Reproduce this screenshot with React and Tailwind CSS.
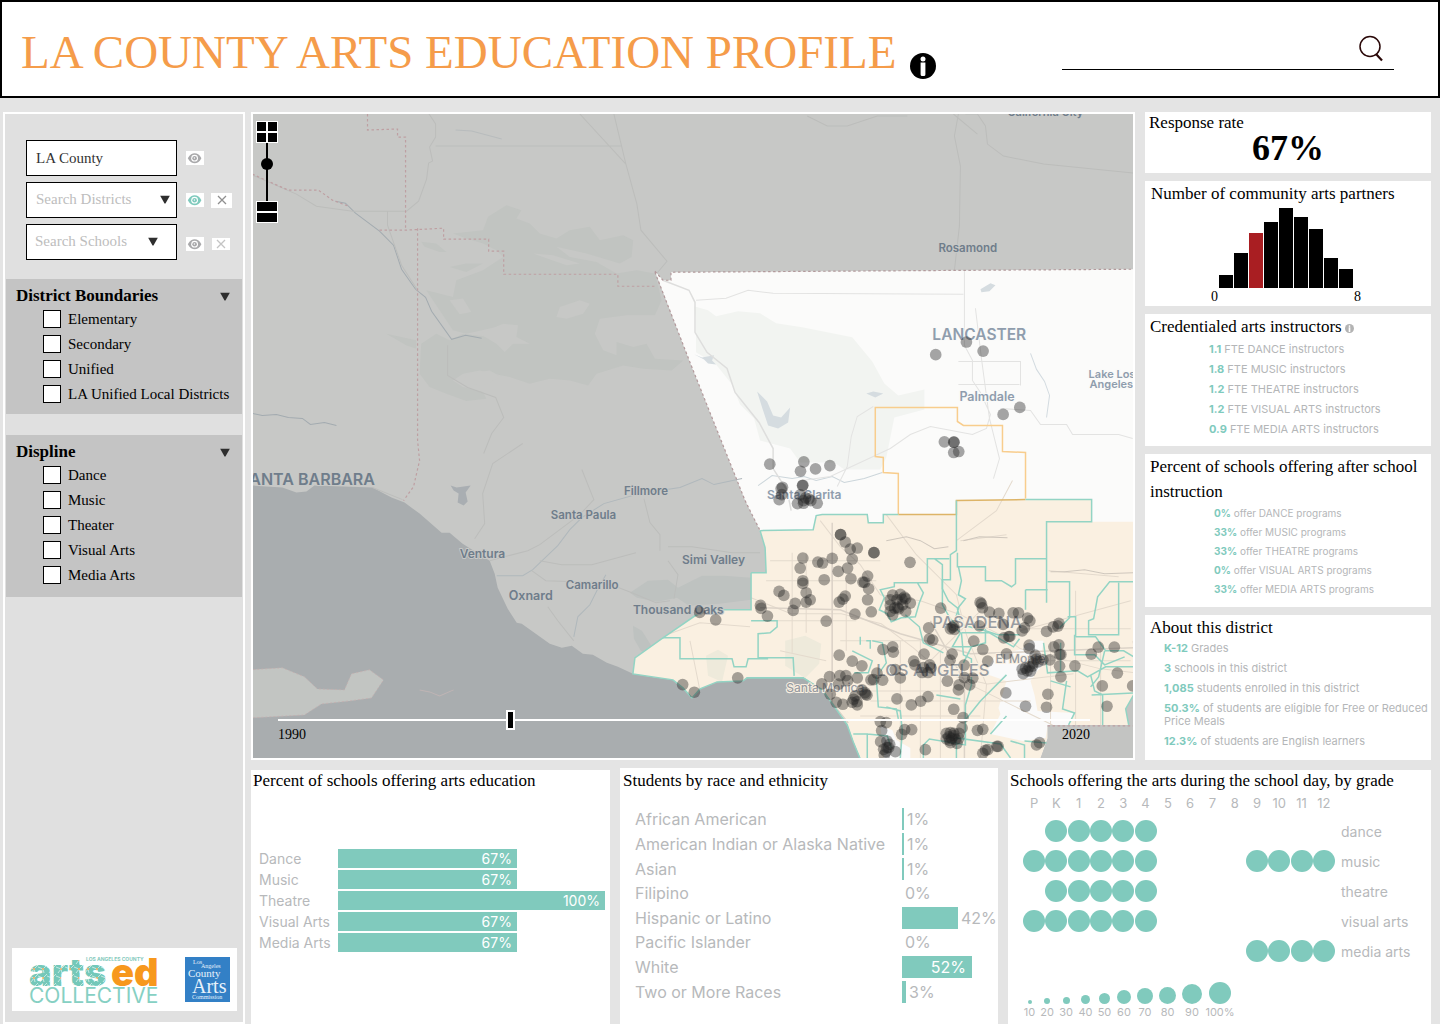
import { useState } from "react";

const SERIF = "font-['Liberation_Serif',serif]";
const SANS = "font-['Inter',sans-serif]";

/* ---------- icons ---------- */

function Eye({ className }) {
  return (
    <svg viewBox="0 0 18 14" className={"h-[14px] w-[18px] " + className} aria-hidden="true">
      <path d="M1.800 7.200C4 3.400 6.300 2.200 8.700 2.200s4.700 1.200 6.700 5c-2 3.800-4.300 5-6.700 5S4 11 1.800 7.200Z" fill="currentColor" />
      <circle cx="8.600" cy="7.200" r="3.400" fill="#fff" />
      <circle cx="8.600" cy="7.200" r="2.300" fill="currentColor" />
      <circle cx="8.400" cy="7" r="0.700" fill="#fff" />
    </svg>
  );
}

function Cross({ className }) {
  return (
    <svg viewBox="0 0 12 12" className={"h-3 w-3 " + className} aria-hidden="true">
      <path d="M2 2l8 8M10 2l-8 8" stroke="currentColor" strokeWidth="1.300" fill="none" />
    </svg>
  );
}

function Caret({ className = "" }) {
  return (
    <svg viewBox="0 0 10 9" className={"h-[9px] w-[10px] " + className} aria-hidden="true">
      <path d="M0.200 0.800h9.600L5.500 8.500h-1Z" fill="#2e2e2e" />
    </svg>
  );
}

function InfoIcon({ className }) {
  return (
    <svg viewBox="0 0 26 26" className={className} aria-hidden="true">
      <circle cx="13" cy="13" r="13" fill="currentColor" />
      <circle cx="13" cy="6" r="2.500" fill="#fff" />
      <path d="M10.600 9.500h4.800v12a1.500 1.500 0 0 1-1.500 1.500h-1.800a1.500 1.500 0 0 1-1.500-1.500Z" fill="#fff" />
    </svg>
  );
}

/* ---------- header ---------- */

function Header() {
  return (
    <header className="flex h-[98px] items-center justify-between border-2 border-black bg-white pt-[2px] pr-11 pl-[19px]">
      <div className="flex items-end gap-[14px] pt-1">
        <h1 className="text-[47px] leading-[56px] whitespace-nowrap text-[#f59c4a]">LA COUNTY ARTS EDUCATION PROFILE</h1>
        <button type="button" aria-label="About this profile" className="mb-px text-black">
          <InfoIcon className="h-[26px] w-[26px]" />
        </button>
      </div>
      <div className="flex h-10 w-[332px] items-end border-b border-black pr-2 pb-1.5">
        <input type="search" aria-label="Search" className="min-w-0 flex-1 bg-transparent text-lg outline-none" />
        <button type="button" aria-label="Run search">
          <svg viewBox="0 0 28 28" className="h-7 w-7" fill="none" stroke="#2a0808" aria-hidden="true">
            <circle cx="12" cy="11.500" r="10" strokeWidth="1.500" />
            <path d="M18 19l6 6.500" strokeWidth="2.200" />
          </svg>
        </button>
      </div>
    </header>
  );
}

/* ---------- sidebar ---------- */

const FIELD = "h-9 w-[151px] border border-black bg-white text-[15px]";

function CheckGroup({ title, items, className }) {
  return (
    <section className={"mx-px bg-[#c4c4c4] pt-[6px] " + className}>
      <button type="button" className="flex w-full items-center justify-between pr-3 pl-[10px] leading-[22px]">
        <span className="text-[17px] font-bold">{title}</span>
        <Caret />
      </button>
      <div className="mt-[3px] flex flex-col gap-[7px] pl-[37px]">
        {items.map((t) => (
          <label key={t} className="flex items-center gap-[7px] text-[15px] leading-[18px] whitespace-nowrap">
            <input type="checkbox" className="h-[18px] w-[18px] shrink-0 appearance-none border border-black bg-white checked:bg-black" />
            {t}
          </label>
        ))}
      </div>
    </section>
  );
}

function Logos() {
  return (
    <div className="mx-[7px] mr-[6px] mb-[11px] flex h-[63px] items-center justify-between bg-white pr-[7px] pl-[17px]">
      <svg viewBox="0 0 134 50" className="h-[50px] w-[134px]" role="img" aria-label="Los Angeles County Arts Ed Collective">
        <defs>
          <pattern id="mosaic" width="9" height="9" patternUnits="userSpaceOnUse">
            <rect width="9" height="9" fill="#74c8b9" />
            <path d="M0 3l5 2 4-4M5 5l1 4M5 5L2 9" fill="none" stroke="#e6f6f3" strokeWidth="0.700" />
            <circle cx="5" cy="5" r="0.900" fill="#f6a34a" />
          </pattern>
        </defs>
        <g fontFamily="Inter, sans-serif">
          <text x="0" y="31" fontSize="38" fontWeight="900" fill="url(#mosaic)">arts</text>
          <text x="82" y="31" fontSize="38" fontWeight="900" fill="#f7981d">ed</text>
          <text x="57" y="6" fontSize="5" fontWeight="700" fill="#86cabd">LOS ANGELES COUNTY</text>
          <text x="0" y="48" fontSize="21" fontWeight="400" fill="#86d0c3">COLLECTIVE</text>
        </g>
      </svg>
      <svg viewBox="0 0 45 45" className="h-[45px] w-[45px]" role="img" aria-label="Los Angeles County Arts Commission">
        <rect width="45" height="45" fill="#3380c6" />
        <g fill="#e8f2fb" fontFamily="'Liberation Serif', serif">
          <text x="8" y="7" fontSize="6">Los</text>
          <text x="16" y="11" fontSize="6">Angeles</text>
          <text x="3" y="20" fontSize="11">County</text>
          <text x="7" y="36" fontSize="20">Arts</text>
          <text x="7" y="42" fontSize="6">Commission</text>
        </g>
      </svg>
    </div>
  );
}

function Sidebar() {
  return (
    <aside className="flex w-[242px] shrink-0 flex-col border-2 border-white bg-[#e0e0e0]">
      <div className="flex flex-col gap-[6px] pt-[26px] pl-[21px]">
        <div className="flex items-center gap-[9px]">
          <input aria-label="County" defaultValue="LA County" className={FIELD + " px-[9px] text-[#333]"} />
          <button type="button" aria-label="Show county" className="bg-white text-[#a9a9ab]"><Eye /></button>
        </div>
        <div className="flex items-center gap-[7px]">
          <div className="relative mr-[2px]">
            <select aria-label="Search districts" className={FIELD + " appearance-none px-[9px] pb-[2px] text-[#bdbdbd]"}>
              <option>Search Districts</option>
            </select>
            <Caret className="pointer-events-none absolute top-[13px] right-[7px]" />
          </div>
          <button type="button" aria-label="Show districts" className="bg-white text-[#7fcabd]"><Eye /></button>
          <button type="button" aria-label="Clear district" className="flex h-[15px] w-[21px] items-center justify-center bg-white text-[#8f8f8f]"><Cross /></button>
        </div>
        <div className="flex items-center gap-2">
          <div className="relative mr-px">
            <select aria-label="Search schools" className={FIELD + " appearance-none px-2 pb-[2px] text-[#bdbdbd]"}>
              <option>Search Schools</option>
            </select>
            <Caret className="pointer-events-none absolute top-[13px] right-[19px]" />
          </div>
          <button type="button" aria-label="Show schools" className="mt-[3px] bg-white text-[#a9a9ab]"><Eye /></button>
          <button type="button" aria-label="Clear school" className="mt-[3px] flex h-3 w-[18px] items-center justify-center bg-white text-[#c4c4c4]"><Cross /></button>
        </div>
      </div>
      <CheckGroup title="District Boundaries" className="mt-[19px] pb-[11px]" items={["Elementary", "Secondary", "Unified", "LA Unified Local Districts"]} />
      <CheckGroup title="Displine" className="mt-[21px] pb-[13px]" items={["Dance", "Music", "Theater", "Visual Arts", "Media Arts"]} />
      <div className="flex-1" />
      <Logos />
    </aside>
  );
}

/* ---------- map ---------- */

/* School locations, three units per map unit, one list for each map sheet. */
const NORTH = [
  [736, 373], [828, 335], [878, 362], [988, 531], [938, 552], [762, 634], [790, 635], [791, 635], [790, 666], [805, 663],
  [239, 701], [341, 694], [331, 722], [376, 715], [419, 705], [338, 764],
];
const SOUTH = [
  [127, 20], [123, 24], [187, 15], [117, 57], [125, 42], [180, 43], [190, 60], [172, 69], [190, 68], [206, 55], [231, 68], [212, 60], [196, 52],
  [301, 162], [301, 162], [315, 184], [330, 205], [351, 202], [401, 216], [401, 216], [509, 245],
  [188, 232], [180, 262], [233, 244], [247, 247], [276, 233], [336, 235], [322, 262], [294, 272], [252, 297], [332, 294], [382, 286], [368, 304], [373, 305], [385, 324],
  [188, 300], [188, 308], [117, 332], [131, 344], [198, 336], [210, 357], [198, 364], [165, 368], [159, 389], [61, 374], [63, 383], [82, 406],
  [315, 346], [308, 355], [297, 364], [382, 357], [393, 393], [344, 400], [258, 421],
  [457, 343], [480, 341], [492, 349], [496, 354], [450, 357], [470, 357], [510, 367], [487, 372], [450, 374], [463, 382], [475, 384], [450, 392], [496, 392], [457, 402], [472, 380], [485, 355],
  [601, 382], [565, 441], [567, 474], [577, 478], [640, 435], [630, 444], [642, 446], [636, 440],
  [719, 365], [723, 369], [726, 381], [747, 394], [775, 398], [818, 396], [834, 396], [788, 431], [717, 435], [861, 412], [868, 420], [852, 441], [845, 450], [790, 471], [805, 467], [808, 467],
  [955, 428], [952, 436], [938, 438], [918, 452], [700, 481], [727, 506], [742, 541], [798, 519],
  [428, 506], [457, 498], [459, 514], [297, 523], [336, 541], [365, 555], [551, 520], [520, 541], [524, 552], [549, 560], [568, 552], [572, 561], [563, 575], [545, 575], [635, 520], [629, 538], [671, 553],
  [866, 493], [866, 503], [884, 523], [907, 537], [887, 535], [878, 547], [866, 558], [855, 562], [845, 565], [848, 578], [870, 571], [893, 543], [860, 570], [876, 556], [928, 537], [940, 498], [955, 492], [961, 521], [957, 556], [961, 588], [1003, 555], [1052, 520], [1073, 499], [1121, 499], [1194, 483], [1130, 577], [1085, 615], [1176, 615], [1099, 676], [957, 521],
  [245, 609], [268, 587], [299, 584], [317, 584], [322, 599], [295, 610], [351, 591], [392, 597], [427, 598], [410, 577], [480, 591], [465, 566], [400, 596],
  [270, 640], [288, 664], [308, 670], [336, 664], [350, 662], [351, 672], [365, 627], [374, 635], [376, 640], [380, 643], [340, 655], [345, 645],
  [470, 654], [513, 672], [541, 661], [563, 647], [621, 601], [656, 612], [654, 627], [688, 612], [697, 592], [672, 590], [640, 685], [668, 710], [796, 636], [855, 676], [922, 640], [918, 679],
  [420, 722], [438, 725], [424, 749], [484, 760], [493, 746], [514, 746], [555, 806], [665, 741], [711, 748], [727, 745], [735, 808], [742, 806], [769, 796], [773, 796], [727, 817], [888, 792], [897, 785],
  [421, 782], [440, 780], [448, 790], [430, 805], [437, 812], [445, 800], [465, 812], [432, 822], [440, 800],
  [618, 757], [630, 755], [640, 757], [656, 757], [618, 774], [628, 778], [634, 772], [645, 775], [655, 772], [650, 787], [630, 785], [640, 764], [625, 768],
];
const WEST = [[1349, 425], [1397, 447], [1298, 641], [1333, 664], [1463, 621]];

function Schools({ points }) {
  return points.map(([x, y], i) => <circle key={i} cx={x} cy={y} r="17.500" />);
}

const COUNTY =
  "M655 271L663 280H671V272L1133 269V724H1047V737L1040 757H860L853 740L847 723L833 703L822 688L803 676H747L743 680L717 681L700 688L692 697L683 687L673 679L650 676L633 673L635 657L663 637L695 615L709 609H751V572H766L765 547L760 530L745 500L690 362Z";
const OCEAN =
  "M253 485L283 487L297 492L307 491L315 485L373 487L392 497L405 502L420 513L442 532L450 532L463 543L490 560L495 573L498 587L508 608L517 622L522 623L536 633L550 643L562 647L572 645L583 653L593 654L607 662L618 666L633 673L650 676L673 679L683 687L692 697L700 688L717 681L743 680L747 677H803L822 688L833 703L847 723L853 740L860 757V800H200V485Z";
const URBAN =
  "M760 530L813 529L816 515L822 514H867L868 522H883V514H956V500L1091 499V521H1133V724H1047V737L1040 757H860L853 740L847 723L833 703L822 688L803 676H747L743 680L717 681L700 688L692 697L683 687L673 679L650 676L633 673L635 657L663 637L695 615L709 609H751V572H766L765 547Z";

const GREY_LABELS = [
  [938, 252, "Rosamond", 11.500], [250, 484, "ANTA BARBARA", 16], [624, 494, "Fillmore", 11.500], [551, 518, "Santa Paula", 11.500],
  [460, 557, "Ventura", 12], [566, 588, "Camarillo", 11.500], [509, 599, "Oxnard", 12.500], [682, 563, "Simi Valley", 12], [633, 613, "Thousand Oaks", 12], [1007, 116, "California City", 11],
];
const LIGHT_LABELS = [
  [932, 340, "LANCASTER", 15.500], [959, 401, "Palmdale", 12.500], [1088, 378, "Lake Los", 11], [1089, 388, "Angeles", 11], [767, 498, "Santa Clarita", 12],
];
const URBAN_LABELS = [[932, 627, "PASADENA", 16.500], [876, 675, "LOS ANGELES", 16.500], [995, 662, "El Monte", 12], [786, 691, "Santa Monica", 12]];

function MapDrawing() {
  return (
    <svg viewBox="253 114 880 643" preserveAspectRatio="xMidYMid slice" className="absolute inset-0 h-full w-full" role="img" aria-label="Map of schools in Los Angeles County">
      <defs>
        <clipPath id="county"><path d={COUNTY} /></clipPath>
      </defs>
      <rect x="0" y="0" width="1500" height="1100" fill="#c7c8c6" />

      {/* forest outside the county */}
      <g transform="translate(250 110) scale(.33333)" fill="#c1c4c1">
        <path d="M610 370L700 360L715 320L770 285L815 300L800 325L840 340L870 370L920 385L960 360L1020 350L1050 390L1120 375L1150 390L1145 440L1110 460L1060 445L1010 430L920 410L960 440L1040 455L1100 490L1160 480L1215 490L1235 570L1215 615L1130 615L1050 625L1035 670L1060 720L1100 735L1100 695L1150 710L1190 700L1215 745L1300 750L1265 780L1180 775L1120 765L1040 790L1015 825L960 810L900 805L840 820L780 800L730 790L690 780L640 790L610 810L640 830L700 845L710 865L650 872L590 850L540 830L510 790L515 700L560 670L600 690L640 670L720 680L770 640L740 650L650 670L610 660L570 600L530 540L610 560L620 510L700 480L760 440L740 420L700 400L650 385Z" />
        <path d="M515 395L560 400L590 425L570 425L525 410ZM410 670L500 690L500 715L470 705ZM600 470L650 460L700 460L650 485Z" />
        <path fill="#c7c8c6" d="M600 570L640 565L665 605L630 612ZM690 670L760 640L805 645L800 680L840 700L790 700L765 725L740 700ZM650 790L720 780L755 800L700 825L640 820ZM930 590L990 570L1020 580L1000 610L950 625L920 620ZM850 430L910 435L990 460L950 465Z" />
      </g>
      <g fill="#bec2c0">
        <path d="M630 592l18-12 20-1 10 8 24-12 22 0 27 2v22l-32 4-30 2-12-8-20 4-20-4ZM633 625l9 5 10 16 3 12-14-8-7-12Z" />
        <path d="M451 485l6 2 14-2-5 7 2 9-4 4-6-3 1-9-5-3Z" fill="#a9aeb2" />
      </g>

      {/* county, vegetation and water */}
      <path d={COUNTY} fill="#fbfbfa" />
      <path d="M694 306l14 4 8 6 22-5 22 2 16 10 26 4 50 10 20 24 12 22 14 12 26-6v20l-30 8-8 40-6 12h-36l-10-7h-34l-10-14-30-8-6-22-14-14-8-20-16-20-20-12V318Z" fill="#f2f4f1" />
      <path d="M757 391l10 10 6 14 8 2 9-10-2 15-10 6-10-3-6-18ZM694 354l8 3 12-2-2 5 4 4-8-1-4-4ZM866 393l7-2 10 2-8 4ZM980 289l10-6 5 2-6 6-8 1Z" fill="#d5dce0" />
      <path d={URBAN} fill="#faf0e1" />
      <path d="M785 640l20-5 16 8-2 20-14 14-20-12ZM706 655l12-6 10 6-6 26-14-6Z" fill="#eeeadb" />
      <path d="M994 656L1022 648L1030 640H1043L1041 653L1047 660L1037 670L1030 680L1034 694L1037 710L1073 712L1068 725H1047L1045 737L1022 740L990 733L1000 713L998 707L1006 680L985 673ZM880 725l12 4 4 10 14 8v10h-26Z" fill="#fafafa" />
      <path d={OCEAN} fill="#a9adaf" />
      <path d="M250 669L283 667L305 676L318 688L345 689L352 673L370 669L384 679L372 697L350 700L322 703L305 714L250 717Z" fill="#c2c5c2" stroke="#c5adad" strokeWidth=".7" strokeDasharray="2 2" />
      <path d="M420 689l10 2 10 4 14-6" fill="none" stroke="#bfb4b4" />
      <path d="M1133 694l-8 14 3 16h-81v14l-7 19h93Z" fill="#c3c4c2" />

      {/* rivers */}
      <g fill="none" stroke="#a3abb0">
        <path d="M336 201l10 2 10 10 24 18 14 14 8 24 14 20 10 8 6 14 20 28 14-4 16 3" />
        <path d="M253 413l10 2 14-1 12 3 14 1 8 6 14-2 12 3" />
        <path d="M497 575h26l10-6 25-24 12-16 12-12 22-14 36-10 40-6 22-9 12 6 28-6" stroke="#b0b8bc" />
        <path d="M574 636l4-20 12-12 8-16 8-14" stroke="#b0b8bc" />
        <path d="M758 485l14-10 20 3 12-2 12 4 16-4 12 6 20-4 18-6" stroke="#ccd6db" />
        <path d="M1030 353l6 16 8 12 5 14-3 22" stroke="#d3dbe0" />
        <path d="M456 130l16 1 30 8" stroke="#b8bcbd" />
      </g>

      {/* roads */}
      <g fill="none" stroke="#bcbdbb" strokeWidth="1">
        <path d="M253 175l44 19 20 12 36 5h54l12-10 8-22 2-16 4-2-3-14 6-10v-13l-13-20M436 146h185M580 114l46 50M614 114l12 50 11 40 4 26 26 31-10 12M388 211v14l14 40 16 25M448 345v30l20 12 28 10 8 20-12 16-8 20" />
        <path d="M373 487l30 12M475 538l10-15-2-30 10-30 30-20M490 560l38-10 12-6 40-30 14-15-12-30M540 560l22 4h30l44-12M532 570l14 10 60 2 26 10 24 10 14-2M548 606l10 14 16 20M644 498l6 24 10 12v16M668 560l10 14-4 24M668 546l24 0 40 6 28 0" />
        <path d="M965 114l12 0 8 12 2 18 16 12 40 8 90 9M958 114l-4 22 6 30-1 60-5 44M953 114l24 20M907 116l-30 0-30 10-20 0-20-10" />
      </g>
      <g fill="none" stroke="#e3e3e2" clipPath="url(#county)">
        <path d="M663 280l26 10 6 12 0 30 12 20 20 16 8 24 24 30 14 26v20l14 22 4 20" stroke="#dededd" strokeWidth="1.500" />
        <path d="M964 269v76l8 15v20l8 12 10 22-4 14-14 6-42-8-20 8-20 14-30 14-30 14-28 4M696 300l30-2 22-8 25 3 190 1M975 308l6 50 8 60 10 40-6 20M958 361h62v24M958 384h61M1000 408l30 2 10 14 26 0 6 10 46 0 14 4M837 486l10-20 4-30 6-20 16-10" />
        <g stroke="#e4dacd">
          <path d="M820 520l20 26 20 18 20 30 40 6 40 14 40 20 20 14 80 20 53 6M751 597l40 16 50 0 40 10 32 24 30 26 44 10 86-10M886 514l30 40 40 40 10 40 20 50-6 72M832 540v170M792 552v100M770 560h90M766 580h110M766 620h90M840 640h90M870 700h160M900 640v117M920 640v117M940 650v107M956 540l40-30 16-30M1020 628h110M1050 640v90M1075 590v134M1100 640v84M1040 660h90M860 690h90M860 715h120M1130 600l-110 30M960 540l46-6M1048 570l70 6M962 680l90 44M980 610l-60 60M820 560h60M806 552v80M846 580v70M780 650l46 10M650 640l50-18 50 4M690 640l10 50" />
        </g>
        <path d="M832 522v180l16 20M760 607l80 2 60 24 70 20 163-6M930 620l34 60 0 77" stroke="#dcd3c8" strokeWidth="1.500" />
        <path d="M886 540l20-4 14 4 14 8 14-2M963 540l16-4 28 1M1050 571l14 0 20-2 20 4 30-1" stroke="#cfc7bd" />
      </g>

      {/* county lines */}
      <g fill="none" stroke="#be9fa2" strokeWidth="1.200" strokeDasharray="2.500 2.500">
        <path d="M368 114v16l30-1v8l8 0V228M253 174l20 9 16 7 30 0 14 10 16 6M380 230h26l38-2v11h45v12h15v23h114v12h37M418 228V440l2 20-6 26-10 14" />
        <path d="M655 271L663 280H671V272L1133 269M655 272L690 362L745 500L760 530" stroke="#b39a9c" />
        <path d="M1047 725h86" />
      </g>

      {/* district lines */}
      <g fill="none" strokeWidth="1.500">
        <path d="M898 514v-41l-15-1v-15l-8-1v-49h82v14l6 4h39v26l23 1v46" stroke="#f8cd8d" />
        <path d="M898 514h58v-14l69-1" stroke="#ddb467" />
        <g stroke="#93d4c4">
          <path d="M760 530L813 529L816 515L822 514H867L868 522H883V514H898M1025 499H1091V521H1046V602M956 500v50l-6 4v25l-8 0 0 25 8 14 10 10M751 572h15l-1-25-5-17M751 572v37h-42l-14 6-32 22-28 20-2 16 40 6 10 8 9 10 8-9 17-7 26-1 4-3h56l19 12 11 15 14 20 6 17 7 17" />
          <path d="M751 620h26v6l-7 6-12 1v24h35l1 18M663 637l17 0v21h52l2 8h12l2-8 20 0" />
          <path d="M1133 581h-24l-12 15-4 22-5 2 0 14 30 0v-52M1133 656l-10-6-18 0-10-14-20 0M1075 636v-20l-8 0M1047 581h22v36l-10 10M1025 589h22M1025 589v20" />
          <path d="M957 552v14h28v14l16 0 10 6 4-3v-25h31M958 566l3 14-3 14 7 4-8 10 4 16 24 6 12 4 22 0M949 558h-22v24h-33v4l-14 3 4 8-5 12 8 4 4 8 10-4 14-1 4-14 4-10-6-10M934 558l8 6v24l6 12 10 8-3 10" />
          <path d="M905 614l14 12 4 16 12 6 8 4" />
          <path d="M852 650l8 4 12 6-4 12-14 0M860 636l0 8M866 640h4v8M872 640l10 2 4 20-10 14 2 30 18 2 2 10M886 706l14 4 2 20-2 27M853 733h14v24M867 733l20 2 4 12" />
          <path d="M961 632h28l24 14 6-8M961 632l2 22 8 4v26l-6 20 0 40-36-6-6 6v33M964 720l16-20 20-20 6-6M990 733l16-18M936 694l24 4M956 757v-20l44 6 10 14M1043 642l4 30 30-2 10 6 18-10 28 0M1060 642v30M1074 634v20l20 0 10 10 20-8M1066 680l-4 28 12 4-6 12M1090 674l4 16 8 4 0 30M1091 694l42-2M1104 650l-6 26-8 10M1050 680l20 6M1010 740l14 4 0 13M1024 740l22 2M1133 694l-8 14 3 16" />
          <path d="M985 628l0 14-14 4-8 16M948 620l12 12-8 14 20 0" />
        </g>
      </g>

      {/* place names */}
      <g fontFamily="Inter, sans-serif" fontWeight="600" paintOrder="stroke" strokeWidth="2" strokeLinejoin="round">
        <g fill="#6f7d8b" stroke="#c7c8c6">
          {GREY_LABELS.map(([x, y, t, s]) => <text key={t} x={x} y={y} fontSize={s}>{t}</text>)}
        </g>
        <g fill="#8f9dad" stroke="#fafaf9">
          {LIGHT_LABELS.map(([x, y, t, s]) => <text key={t} x={x} y={y} fontSize={s}>{t}</text>)}
        </g>
        <g fill="#989ca1" stroke="#faf0e1">
          {URBAN_LABELS.map(([x, y, t, s]) => <text key={t} x={x} y={y} fontSize={s} fontWeight="500">{t}</text>)}
        </g>
      </g>

      {/* schools */}
      <g fill="#222" fillOpacity=".4">
        <g transform="translate(690 230) scale(.33333)"><Schools points={NORTH} /></g>
        <g transform="translate(740 480) scale(.33333)"><Schools points={SOUTH} /></g>
        <g transform="translate(250 470) scale(.33333)"><Schools points={WEST} /></g>
      </g>
    </svg>
  );
}

function MapPanel() {
  const [zoom, setZoom] = useState(68);
  const [year, setYear] = useState(1998.5);
  return (
    <section className="relative min-w-0 flex-1 overflow-hidden border-2 border-white bg-[#c7c8c6]">
      <MapDrawing />
      <div className="absolute top-[7px] left-[3px] flex w-[22px] flex-col items-center">
        <button type="button" aria-label="Zoom in" onClick={() => setZoom(Math.min(100, zoom + 10))}>
          <svg viewBox="0 0 22 22" className="h-[22px] w-[22px]" aria-hidden="true">
            <rect width="22" height="22" fill="#fff" />
            <rect x="1" y="1" width="20" height="20" fill="#000" />
            <path d="M11 1v20M1 11h20" stroke="#fff" strokeWidth="2" />
          </svg>
        </button>
        <input
          type="range"
          aria-label="Zoom level"
          value={zoom}
          onChange={(e) => setZoom(+e.target.value)}
          className="h-[58px] w-3 appearance-none bg-transparent [direction:rtl] [writing-mode:vertical-lr] [&::-webkit-slider-runnable-track]:w-[2px] [&::-webkit-slider-runnable-track]:bg-black [&::-webkit-slider-thumb]:-ml-[5px] [&::-webkit-slider-thumb]:h-3 [&::-webkit-slider-thumb]:w-3 [&::-webkit-slider-thumb]:appearance-none [&::-webkit-slider-thumb]:rounded-full [&::-webkit-slider-thumb]:bg-black"
        />
        <button type="button" aria-label="Zoom out" onClick={() => setZoom(Math.max(0, zoom - 10))}>
          <svg viewBox="0 0 22 22" className="h-[22px] w-[22px]" aria-hidden="true">
            <rect width="22" height="22" fill="#fff" />
            <rect x="1" y="1" width="20" height="20" fill="#000" />
            <path d="M1 11h20" stroke="#fff" strokeWidth="2" />
          </svg>
        </button>
      </div>
      <div className="absolute right-[43px] bottom-[15px] left-[25px] text-[14px] leading-4">
        <input
          type="range"
          aria-label="Year"
          min="1990"
          max="2020"
          step="0.5"
          value={year}
          onChange={(e) => setYear(+e.target.value)}
          className="block h-5 w-full appearance-none bg-transparent [&::-webkit-slider-runnable-track]:h-[2px] [&::-webkit-slider-runnable-track]:bg-white [&::-webkit-slider-thumb]:-mt-[9px] [&::-webkit-slider-thumb]:h-5 [&::-webkit-slider-thumb]:w-[9px] [&::-webkit-slider-thumb]:appearance-none [&::-webkit-slider-thumb]:border-2 [&::-webkit-slider-thumb]:border-white [&::-webkit-slider-thumb]:bg-black"
        />
        <div className="-mt-[3px] flex justify-between">
          <span>1990</span>
          <span>2020</span>
        </div>
      </div>
    </section>
  );
}

/* ---------- statistics ---------- */

const TITLE = "text-[17px] leading-[25px] text-black";

function Stat({ value, children }) {
  return (
    <li>
      <b className="font-bold text-[#7fcabd]">{value}</b> {children}
    </li>
  );
}

const PARTNERS = [13, 35, 55, 66, 80, 71, 59, 30, 19];

function StatsColumn() {
  return (
    <div className="flex w-[286px] shrink-0 flex-col gap-2">
      <section className="bg-white pb-[7px] pl-1">
        <h2 className="text-[17px] leading-[22px]">Response rate</h2>
        <p className="-mt-1 pr-1 text-center text-[36px] leading-9 font-bold">67%</p>
      </section>
      <section className="bg-white pb-px pl-[6px]">
        <h2 className={TITLE}>Number of community arts partners</h2>
        <div className="mr-[78px] ml-[68px] mt-px flex h-[81px] items-end gap-px" role="img" aria-label="Distribution of community arts partners">
          {PARTNERS.map((h, i) => (
            <div key={i} className={i === 2 ? "flex-1 bg-[#a91e22]" : "flex-1 bg-black"} style={{ height: h }} />
          ))}
        </div>
        <div className="mr-[70px] ml-[60px] flex justify-between text-[14px] leading-[17px]">
          <span>0</span>
          <span>8</span>
        </div>
      </section>
      <section className="bg-white pb-[7px] pl-[5px]">
        <h2 className={TITLE + " flex items-center gap-[3px]"}>
          Credentialed arts instructors
          <button type="button" aria-label="About credentialed instructors" className="mt-1 text-[#b3b3b3]"><InfoIcon className="h-[9px] w-[9px]" /></button>
        </h2>
        <ul className={SANS + " pl-[59px] text-[11px] leading-5 text-[#b4b6b8]"}>
          <Stat value="1.1">FTE DANCE instructors</Stat>
          <Stat value="1.8">FTE MUSIC instructors</Stat>
          <Stat value="1.2">FTE THEATRE instructors</Stat>
          <Stat value="1.2">FTE VISUAL ARTS instructors</Stat>
          <Stat value="0.9">FTE MEDIA ARTS instructors</Stat>
        </ul>
      </section>
      <section className="bg-white pb-2 pl-[5px]">
        <h2 className={TITLE}>Percent of schools offering after school instruction</h2>
        <ul className={SANS + " pl-16 text-[10px] leading-[19px] text-[#b4b6b8]"}>
          <Stat value="0%">offer DANCE programs</Stat>
          <Stat value="33%">offer MUSIC programs</Stat>
          <Stat value="33%">offer THEATRE programs</Stat>
          <Stat value="0%">offer VISUAL ARTS programs</Stat>
          <Stat value="33%">offer MEDIA ARTS programs</Stat>
        </ul>
      </section>
      <section className="bg-white pb-3 pl-[5px]">
        <h2 className={TITLE}>About this district</h2>
        <ul className={SANS + " flex flex-col gap-[7px] pt-[2px] pl-[14px] text-[11px] leading-[13px] text-[#b4b6b8]"}>
          <Stat value="K-12">Grades</Stat>
          <Stat value="3">schools in this district</Stat>
          <Stat value="1,085">students enrolled in this district</Stat>
          <Stat value="50.3%">of students are eligible for Free or Reduced Price Meals</Stat>
          <Stat value="12.3%">of students are English learners</Stat>
        </ul>
      </section>
    </div>
  );
}

/* ---------- charts ---------- */

const OFFERING = [["Dance", 67], ["Music", 67], ["Theatre", 100], ["Visual Arts", 67], ["Media Arts", 67]];
const RACE = [
  ["African American", 1], ["American Indian or Alaska Native", 1], ["Asian", 1], ["Filipino", 0],
  ["Hispanic or Latino", 42], ["Pacific Islander", 0], ["White", 52], ["Two or More Races", 3],
];
const GRADES = ["P", "K", "1", "2", "3", "4", "5", "6", "7", "8", "9", "10", "11", "12"];
const BY_GRADE = [
  ["dance", "01111100000000"], ["music", "11111100001111"], ["theatre", "01111100000000"],
  ["visual arts", "11111100000000"], ["media arts", "00000000001111"],
];
const SCALE = [
  ["10", 4, "w-[17px]"], ["20", 6, "w-[18px]"], ["30", 7, "w-5"], ["40", 9, "w-[19px]"], ["50", 11, "w-[19px]"],
  ["60", 14, "w-5"], ["70", 16, "w-[22px]"], ["80", 17, "w-[23px]"], ["90", 20, "w-[26px]"], ["100%", 22, "w-[30px]"],
];

function Charts() {
  return (
    <div className="grid flex-1 grid-cols-[359fr_378fr_423fr] gap-[10px]">
      <section className="bg-white pr-[5px] pl-2">
        <h2 className="-ml-[6px] text-[17px] leading-[22px]">Percent of schools offering arts education</h2>
        <ul className={SANS + " mt-[57px] flex flex-col gap-[2px] text-[14px] leading-[19px] text-[#b7b9bb]"}>
          {OFFERING.map(([name, pct]) => (
            <li key={name} className="flex">
              <span className="w-[79px] shrink-0">{name}</span>
              <div className="flex-1">
                <div className="bg-[#80cabd] pr-[5px] text-right text-white" style={{ width: pct + "%" }}>{pct}%</div>
              </div>
            </li>
          ))}
        </ul>
      </section>

      <section className="-mt-[2px] bg-white pt-[2px] pl-[15px]">
        <h2 className="-ml-3 text-[17px] leading-[22px]">Students by race and ethnicity</h2>
        <ul className={SANS + " mt-[15px] flex h-[197px] flex-col text-[16px] text-[#b7b9bb]"}>
          {RACE.map(([name, pct]) => (
            <li key={name} className="flex flex-1 items-center leading-[22px]">
              <span className="w-[267px] shrink-0 whitespace-nowrap">{name}</span>
              <div className="flex h-[22px] items-center bg-[#80cabd] text-white" style={{ width: Math.ceil(pct * 1.33) }}>
                {pct > 50 && <span className="w-full pr-[6px] text-right">{pct}%</span>}
              </div>
              {pct <= 50 && <span className="ml-[3px]">{pct}%</span>}
            </li>
          ))}
        </ul>
      </section>

      <section className="bg-white pl-[15px]">
        <h2 className="-ml-[13px] text-[17px] leading-[22px] whitespace-nowrap">Schools offering the arts during the school day, by grade</h2>
        <table className={SANS + " w-[402px] table-fixed border-collapse text-[13px] text-[#b7b9bb]"}>
          <thead>
            <tr className="h-6">
              {GRADES.map((g) => <th key={g} scope="col" className="p-0 font-normal">{g}</th>)}
              <td className="w-[90px]" />
            </tr>
          </thead>
          <tbody>
            {BY_GRADE.map(([name, row]) => (
              <tr key={name} className="h-[30px]">
                {row.split("").map((on, i) => (
                  <td key={i} className="p-0">{on === "1" && <div className="mx-auto h-[22px] w-[22px] rounded-full bg-[#80cabd]" />}</td>
                ))}
                <th scope="row" className="p-0 pl-[6px] text-left text-[14px] font-normal whitespace-nowrap">{name}</th>
              </tr>
            ))}
          </tbody>
        </table>
        <ul className={SANS + " mt-4 -ml-[2px] flex items-end text-[11px] leading-4 text-[#b7b9bb]"}>
          {SCALE.map(([t, d, w]) => (
            <li key={t} className={"flex flex-col items-center " + w}>
              <div className="rounded-full bg-[#80cabd]" style={{ width: d, height: d }} />
              {t}
            </li>
          ))}
        </ul>
      </section>
    </div>
  );
}

export default function App() {
  return (
    <div className={SERIF + " flex min-h-screen flex-col bg-[#e4e4e4] text-black"}>
      <Header />
      <main className="flex flex-1 gap-[6px] pt-[14px] pr-[9px] pl-[3px]">
        <Sidebar />
        <div className="flex min-w-0 flex-1 flex-col gap-[10px]">
          <div className="flex gap-[10px]">
            <MapPanel />
            <StatsColumn />
          </div>
          <Charts />
        </div>
      </main>
    </div>
  );
}
